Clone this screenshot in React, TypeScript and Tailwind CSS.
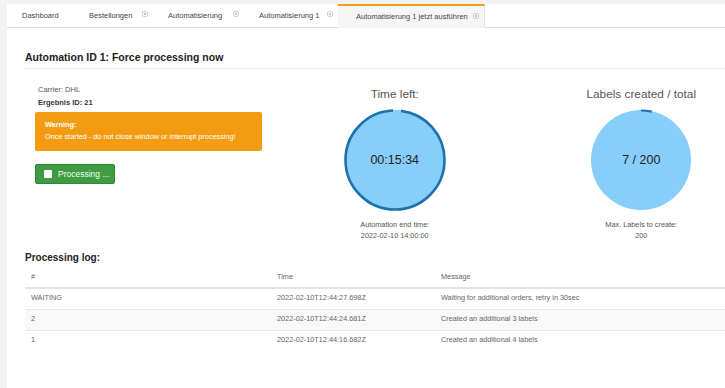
import React from "react";

type Tab = { label: string; width: number; closable: boolean; active?: boolean };

const tabs: Tab[] = [
  { label: "Dashboard", width: 67, closable: false },
  { label: "Bestellungen", width: 79, closable: true },
  { label: "Automatisierung", width: 91, closable: true },
  { label: "Automatisierung 1", width: 94, closable: true },
  { label: "Automatisierung 1 jetzt ausführen", width: 147, closable: true, active: true },
];

const logRows = [
  { id: "WAITING", time: "2022-02-10T12:44:27.698Z", message: "Waiting for additional orders, retry in 30sec" },
  { id: "2", time: "2022-02-10T12:44:24.681Z", message: "Created an additional 3 labels" },
  { id: "1", time: "2022-02-10T12:44:16.682Z", message: "Created an additional 4 labels" },
];

function CloseIcon() {
  return (
    <svg width="6" height="6" viewBox="0 0 6 6" className="absolute top-[7px] right-[5px]">
      <rect x="0.5" y="0.5" width="5" height="5" rx="1.5" fill="none" stroke="#c4c4c4" strokeWidth="0.8" />
      <path d="M1.9 1.9 L4.1 4.1 M4.1 1.9 L1.9 4.1" stroke="#b0b0b0" strokeWidth="0.8" />
    </svg>
  );
}

function Gauge({ label, start, end, full }: { label: string; start: number; end: number; full?: boolean }) {
  // angles in degrees, clockwise from 12 o'clock
  const r = 49.5;
  const c = 2 * Math.PI * r;
  const len = ((end - start) / 360) * c;
  return (
    <div className="relative w-[102px] h-[102px]">
      <svg width="102" height="102" viewBox="0 0 102 102">
        <circle cx="51" cy="51" r="50" fill="#87cefa" />
        <circle
          cx="51"
          cy="51"
          r={r}
          fill="none"
          stroke="#1b72ad"
          strokeWidth={full ? 2.6 : 2.2}
          strokeDasharray={`${len} ${c}`}
          strokeDashoffset={-(start / 360) * c}
          transform="rotate(-90 51 51)"
        />
      </svg>
      <div className="absolute inset-0 flex items-center justify-center text-[12.5px] text-[#222]">
        {label}
      </div>
    </div>
  );
}

export default function App() {
  return (
    <div
      className="w-[725px] h-[388px] overflow-hidden bg-[#f3f3f3] pt-[4px] pl-[7px]"
      style={{ fontFamily: '"Liberation Sans", Arial, sans-serif' }}
    >
      <div className="w-[800px] h-[400px] bg-white">
        {/* tab bar */}
        <div className="flex h-[24px] border-b border-[#dedede]">
          {tabs.map((t) => (
            <div
              key={t.label}
              className={
                t.active
                  ? "relative flex items-center h-[24px] pl-[18px] bg-[#f6f6f6] border-t-2 border-[#f39c12] border-r border-r-[#e2e2e2] text-[7.5px] text-[#444]"
                  : "relative flex items-center h-[23px] pl-[15px] text-[7.5px] text-[#444]"
              }
              style={{ width: t.width }}
            >
              {t.label}
              {t.closable && <CloseIcon />}
            </div>
          ))}
        </div>

        <div className="pl-[18px] pt-[23px]">
          <div className="w-[740px] border-b border-[#ececec] pb-[5px]">
            <h1 className="text-[10.5px] leading-[12px] font-bold text-[#222]">
              Automation ID 1: Force processing now
            </h1>
          </div>

          <div className="flex w-[740px]">
            {/* left column */}
            <div className="w-[246.5px] pl-[10px] pt-[14px]">
              <div className="pl-[3px] text-[7.5px] leading-[13px] text-[#555]">Carrier: DHL</div>
              <div className="pl-[3px] text-[7.5px] leading-[13px] font-bold text-[#333]">Ergebnis ID: 21</div>
              <div className="mt-[3px] w-[227px] rounded-[2px] bg-[#f39c12] pl-[10px] pt-[7px] pb-[8px] text-[7.3px] leading-[12px] text-white">
                <div className="font-bold">Warning:</div>
                <div>Once started - do not close window or interrupt processing!</div>
              </div>
              <button className="mt-[13px] flex items-center gap-[6px] w-[80px] h-[20px] pl-[8px] rounded-[2px] bg-[#3f9c43] border border-[#2f8834] text-[8.5px] text-[#f2fff2]">
                <span className="w-[8px] h-[8px] rounded-[1px] bg-white" />
                Processing ...
              </button>
            </div>

            {/* time gauge */}
            <div className="w-[246.5px] flex flex-col items-center pt-[18px]">
              <div className="text-[11.8px] leading-[14px] text-[#555]">Time left:</div>
              <div className="mt-[8px]">
                <Gauge label="00:15:34" start={7} end={357} full />
              </div>
              <div className="mt-[8px] text-[7.3px] leading-[11px] text-[#555] text-center">
                <div>Automation end time:</div>
                <div>2022-02-10 14:00:00</div>
              </div>
            </div>

            {/* labels gauge */}
            <div className="w-[246.5px] flex flex-col items-center pt-[18px]">
              <div className="text-[11.8px] leading-[14px] text-[#555]">Labels created / total</div>
              <div className="mt-[8px]">
                <Gauge label="7 / 200" start={0} end={12.6} />
              </div>
              <div className="mt-[8px] text-[7.3px] leading-[11px] text-[#555] text-center">
                <div>Max. Labels to create:</div>
                <div>200</div>
              </div>
            </div>
          </div>

          <h2 className="mt-[11px] text-[10px] leading-[12px] font-bold text-[#222]">Processing log:</h2>

          <table className="mt-[3px] w-[740px] table-fixed border-collapse text-[7.3px] text-[#666]">
            <colgroup>
              <col className="w-[246px]" />
              <col className="w-[164px]" />
              <col />
            </colgroup>
            <thead>
              <tr className="h-[21px] border-b-2 border-[#e3e3e3]">
                <th className="pl-[6px] text-left font-normal text-[#666]">#</th>
                <th className="pl-[6px] text-left font-normal text-[#666]">Time</th>
                <th className="pl-[6px] text-left font-normal text-[#666]">Message</th>
              </tr>
            </thead>
            <tbody>
              {logRows.map((row, i) => (
                <tr
                  key={row.id}
                  className={
                    i === 1
                      ? "h-[21px] bg-[#f9f9f9] border-b border-[#e3e3e3]"
                      : i === 0
                        ? "h-[21px] border-b border-[#e3e3e3]"
                        : "h-[21px]"
                  }
                >
                  <td className="pl-[6px] text-[#666]">{row.id}</td>
                  <td className="pl-[6px] text-[#666]">{row.time}</td>
                  <td className="pl-[6px] text-[#666]">{row.message}</td>
                </tr>
              ))}
            </tbody>
          </table>
        </div>
      </div>
    </div>
  );
}
